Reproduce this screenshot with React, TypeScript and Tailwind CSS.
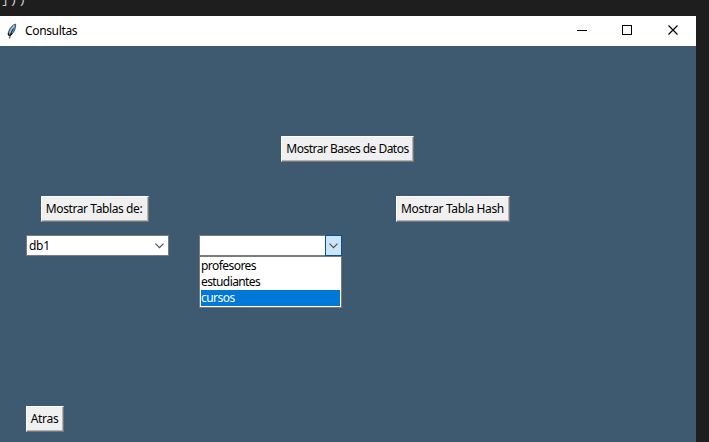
import type { ReactNode } from "react";

function TkButton({ children, className = "" }: { children: ReactNode; className?: string }) {
  return (
    <button
      className={`flex h-[26px] shrink-0 items-center justify-center whitespace-nowrap border border-t-white border-l-white border-r-[#777777] border-b-[#777777] bg-[#f0f0f0] shadow-[inset_-1px_-1px_0_#b4b4b4] ${className}`}
    >
      {children}
    </button>
  );
}

function Chevron() {
  return (
    <svg width="9" height="6" viewBox="0 0 9 6" fill="none" stroke="#505050" strokeWidth="1.2">
      <path d="M0.5 0.7 4.5 4.7 8.5 0.7" />
    </svg>
  );
}

function Feather() {
  return (
    <svg width="10" height="17" viewBox="0 0 10 17">
      <path d="M8.6 1C5.8 1.7 2.6 5 1.6 8.5L1.2 11.5 3 12.6C6.4 10.4 9 6.4 8.6 1Z" fill="#5d8fc0" stroke="#26303e" strokeWidth="0.7" />
      <path d="M7.2 2.6C5 5 3.6 7.6 2.9 10.4" fill="none" stroke="#a9cbe8" strokeWidth="1.4" />
      <path d="M6.4 5.6C4.8 8 3.4 10.6 2.6 15.4" fill="none" stroke="#101010" strokeWidth="0.9" />
      <path d="M1.3 9.8 1.5 12 3.4 12.2 5.3 10.3" fill="none" stroke="#101010" strokeWidth="1.1" />
    </svg>
  );
}

const tables = ["profesores", "estudiantes", "cursos"];
const listTracking = ["tracking-[-0.55px]", "tracking-[-0.6px]", "tracking-[-0.55px]"];

export default function App() {
  return (
    <div className="flex h-[442px] w-[709px] flex-col overflow-hidden bg-[#1e1e1e] font-['Noto_Sans','Open_Sans',sans-serif] text-[12px] leading-4 text-black">
      <div className="h-4 shrink-0">
        <div className="-mt-[8px] pl-px font-['Liberation_Mono',monospace] text-[13px] leading-4 tracking-[0.8px] text-[#c5cbd1]">]))</div>
      </div>
      <div className="flex w-[696px] flex-1 flex-col bg-[#3d5a71]">
        <header className="flex h-[30px] shrink-0 items-center bg-white">
          <div className="ml-[7px] w-[18px]"><Feather /></div>
          <span className="tracking-[-0.35px]">Consultas</span>
          <div className="ml-auto flex h-full" aria-hidden="true">
            <svg width="138" height="30" viewBox="0 0 138 30" fill="none" stroke="#000" strokeWidth="1">
              <path d="M19 14.5h10M64.5 9.5h9v9h-9z" shapeRendering="crispEdges" />
              <path d="m110.5 9.5 9 9m0-9-9 9" strokeWidth="1.2" />
            </svg>
          </div>
        </header>
        <main className="flex flex-1 flex-col pt-[90px]">
          <TkButton className="ml-[281px] w-[133px] tracking-[-0.52px]">Mostrar Bases de Datos</TkButton>
          <div className="mt-[34px] flex">
            <TkButton className="ml-[41px] w-[108px] pr-[2px] tracking-[-0.4px]">Mostrar Tablas de:</TkButton>
            <TkButton className="ml-[247px] w-[114px] pr-[1px] tracking-[-0.36px]">Mostrar Tabla Hash</TkButton>
          </div>
          <div className="mt-[13px] ml-[26px] flex gap-[30px]">
            <div className="flex h-[21px] w-[143px] items-center justify-between border border-[#7a7a7a] bg-white pr-1 pl-0.5">
              <span className="tracking-[-0.3px]">db1</span>
              <Chevron />
            </div>
            <div className="relative flex h-[21px] w-[143px] justify-end border border-[#7a7a7a] bg-white">
              <div className="-my-px -mr-px flex w-[17px] items-center justify-center border border-[#005499] bg-[#cce4f7]">
                <Chevron />
              </div>
              <ul className="absolute top-5 -left-px h-[52px] w-[143px] border border-[#7a7a7a] bg-white p-px">
                {tables.map((name, i) => (
                  <li key={name} className={`h-4 ${listTracking[i]} ${name === "cursos" ? "bg-[#0078d7] text-white" : ""}`}>
                    {name}
                  </li>
                ))}
              </ul>
            </div>
          </div>
          <TkButton className="mt-[150px] ml-[26px] w-[38px] pr-[1px] tracking-[-0.3px]">Atras</TkButton>
        </main>
      </div>
    </div>
  );
}
